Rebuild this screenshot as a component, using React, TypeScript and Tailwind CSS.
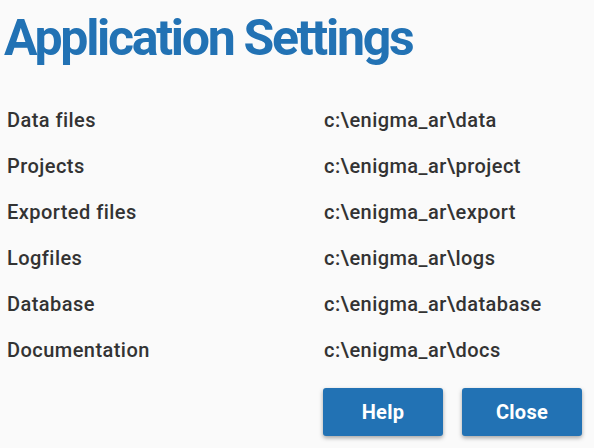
import React from "react";

const rows: [string, string][] = [
  ["Data files", "c:\\enigma_ar\\data"],
  ["Projects", "c:\\enigma_ar\\project"],
  ["Exported files", "c:\\enigma_ar\\export"],
  ["Logfiles", "c:\\enigma_ar\\logs"],
  ["Database", "c:\\enigma_ar\\database"],
  ["Documentation", "c:\\enigma_ar\\docs"],
];

export default function App() {
  return (
    <div
      className="w-[594px] h-[448px] bg-[#fafafa] overflow-hidden"
      style={{ fontFamily: "Roboto, 'Liberation Sans', sans-serif" }}
    >
      <h1 className="mt-[13px] ml-[4px] text-[50px] leading-[50px] font-bold tracking-[-2.3px] text-[#2272b4]">
        Application Settings
      </h1>
      <div className="mt-[34px] grid grid-cols-[317px_1fr] pl-[7px] text-[20px] tracking-[0.45px] font-medium text-[#333333]">
        {rows.map(([k, v]) => (
          <React.Fragment key={k}>
            <div className="h-[46px] leading-[46px]">{k}</div>
            <div className="h-[46px] leading-[46px]">{v}</div>
          </React.Fragment>
        ))}
      </div>
      <div className="mt-[15px] flex justify-end gap-[19px] pr-[12px]">
        <button className="w-[120px] h-[48px] rounded-[3px] bg-[#2272b4] text-white text-[20px] tracking-[0.3px] font-bold shadow-[0_2px_4px_rgba(0,0,0,0.35)]">
          Help
        </button>
        <button className="w-[120px] h-[48px] rounded-[3px] bg-[#2272b4] text-white text-[20px] tracking-[0.3px] font-bold shadow-[0_2px_4px_rgba(0,0,0,0.35)]">
          Close
        </button>
      </div>
    </div>
  );
}
